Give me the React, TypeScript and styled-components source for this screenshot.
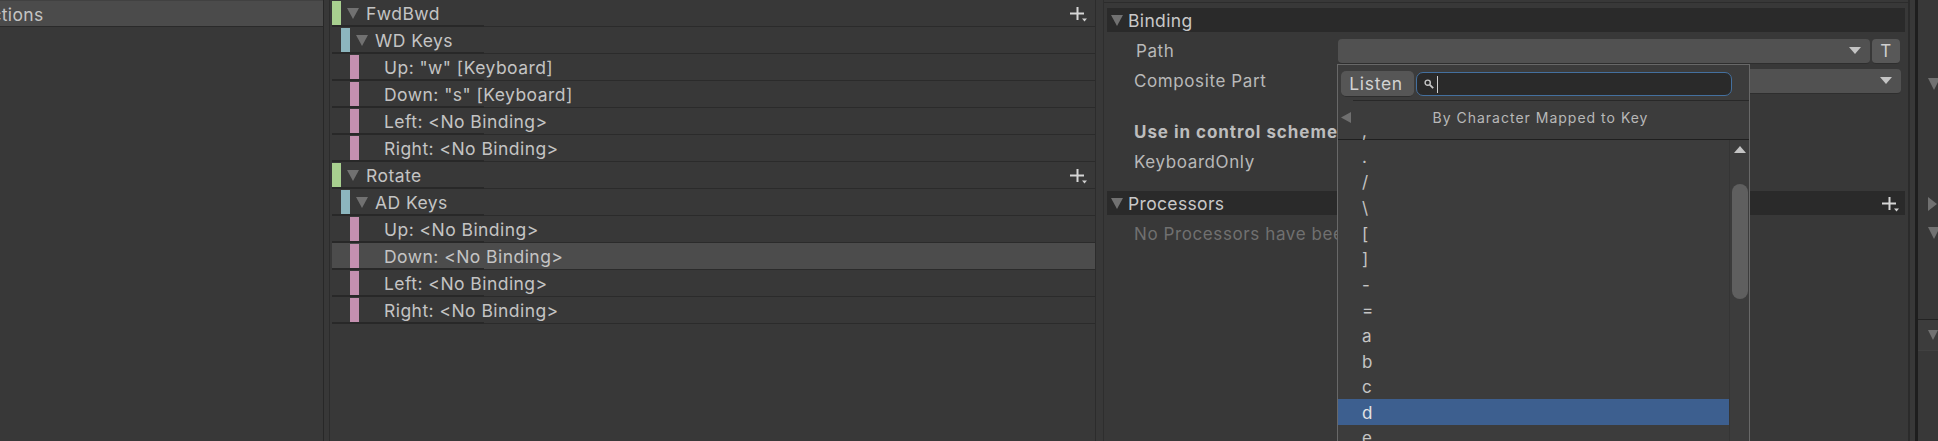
import styled, { createGlobalStyle } from "styled-components";

const GlobalStyle = createGlobalStyle`
  html, body {
    margin: 0;
    padding: 0;
    background: #383838;
    overflow: hidden;
  }
  * {
    box-sizing: border-box;
  }
`;

const Window = styled.div`
  display: flex;
  width: 1938px;
  height: 441px;
  overflow: hidden;
  background: #383838;
  color: #c4c4c4;
  font-family: Inter, "Liberation Sans", sans-serif;
  font-size: 17.5px;
`;

const MapsPanel = styled.div`
  width: 324px;
  flex: none;
  border-right: 1px solid #282828;
`;

const MapRow = styled.div`
  height: 27px;
  width: 323px;
  background: #4b4b4b;
  border-top: 1px solid #414141;
  border-bottom: 1px solid #2a2a2a;
  display: flex;
  align-items: center;
  overflow: hidden;
`;

const MapName = styled.span`
  margin-left: -21px;
  margin-top: 1px;
  letter-spacing: 0.35px;
`;

const ActionsPanel = styled.div`
  width: 766px;
  flex: none;
  margin-left: 5px;
  padding-left: 2px;
  border-left: 1px solid #2c2c2c;
`;

const Row = styled.div<{ $selected?: boolean }>`
  position: relative;
  height: 27px;
  display: flex;
  align-items: center;
  border-bottom: 1px solid #2b2b2b;
  background: ${(props) => (props.$selected ? "#4c4c4c" : "transparent")};

  &::after {
    content: "";
    position: absolute;
    left: 0;
    bottom: -1px;
    width: 152px;
    height: 2px;
    background: #282828;
  }
`;

const Stripe = styled.div<{ $depth: number; $color: string }>`
  width: 9px;
  height: 25px;
  flex: none;
  align-self: flex-start;
  margin-top: 1px;
  margin-left: ${(props) => props.$depth * 9}px;
  background: ${(props) => props.$color};
`;

const Label = styled.span<{ $leaf?: boolean }>`
  margin-left: ${(props) => (props.$leaf ? "25px" : "7px")};
  margin-top: 1px;
  letter-spacing: 0.45px;
  white-space: nowrap;
`;

const Fold = styled.svg<{ $left?: number }>`
  flex: none;
  fill: #717171;
  margin-left: ${(props) => props.$left ?? 0}px;
`;

const PlusSlot = styled.div<{ $right: number }>`
  margin-left: auto;
  margin-right: ${(props) => props.$right}px;
  margin-top: 3px;
  display: flex;
`;

const Gutter = styled.div`
  width: 9px;
  flex: none;
  border-left: 1px solid #2c2c2c;
  border-right: 1px solid #2e2e2e;
`;

const Inspector = styled.div`
  position: relative;
  width: 804px;
  flex: none;
  padding: 8px 3px 0;
  border-top: 1px solid #2c2c2c;
  margin-top: 2px;
  margin-bottom: -2px;
`;

const SectionBar = styled.div`
  height: 24px;
  background: #2a2a2a;
  display: flex;
  align-items: center;
  margin-top: -3px;
  padding-left: 4px;
  letter-spacing: 0.35px;
  color: #c8c8c8;
`;

const SectionTitle = styled.span`
  margin-left: 5px;
`;

const FieldRow = styled.div<{ $indent: number; $gap?: number }>`
  height: 30px;
  display: flex;
  align-items: center;
  margin-top: ${(props) => props.$gap ?? 0}px;
  padding-left: ${(props) => props.$indent}px;
  font-size: 17px;
  letter-spacing: 0.6px;
  color: #b9b9b9;
`;

const FieldLabel = styled.span<{ $width: number }>`
  width: ${(props) => props.$width}px;
  flex: none;
`;

const Dropdown = styled.div<{ $width: number }>`
  width: ${(props) => props.$width}px;
  height: 25px;
  background: #515151;
  border-radius: 4px;
  border-bottom: 1px solid #2e2e2e;
  display: flex;
  align-items: center;
  justify-content: flex-end;
  padding-right: 9px;
`;

const DropArrow = styled.svg`
  fill: #c4c4c4;
`;

const TypeButton = styled.div`
  width: 28px;
  height: 25px;
  margin-left: 2px;
  background: #585858;
  border-radius: 4px;
  border-bottom: 1px solid #2e2e2e;
  display: flex;
  align-items: center;
  justify-content: center;
  font-size: 17px;
  color: #cfcfcf;
`;

const SchemeHeading = styled.div`
  height: 30px;
  margin-top: 21px;
  padding-left: 27px;
  display: flex;
  align-items: center;
  font-size: 17px;
  font-weight: 700;
  letter-spacing: 0.95px;
  white-space: nowrap;
  color: #bdbdbd;
`;

const SchemeRow = styled.div`
  height: 30px;
  padding-left: 27px;
  display: flex;
  align-items: center;
  font-size: 17px;
  letter-spacing: 0.6px;
  color: #b9b9b9;
`;

const EmptyNote = styled.div`
  height: 30px;
  margin-top: 4px;
  padding-left: 27px;
  display: flex;
  align-items: center;
  font-size: 17px;
  letter-spacing: 0.6px;
  white-space: nowrap;
  color: #707070;
`;

const ProcessorsBar = styled(SectionBar)`
  margin-top: 14px;
`;

const Popup = styled.div`
  position: absolute;
  left: 233px;
  top: 61px;
  width: 413px;
  height: 400px;
  background: #3c3c3c;
  border: 1px solid #686868;
  border-bottom: none;
  display: flex;
  flex-direction: column;
  overflow: hidden;
`;

const Toolbar = styled.div`
  position: relative;
  height: 36px;
  flex: none;
  display: flex;
  align-items: center;
  padding: 2px 17px 0 3px;
  gap: 2px;

  &::after {
    content: "";
    position: absolute;
    left: 15px;
    right: 0;
    bottom: 0;
    height: 1px;
    background: #282828;
  }
`;

const ListenButton = styled.div`
  width: 73px;
  height: 26px;
  flex: none;
  padding-right: 3px;
  background: #565656;
  border-radius: 5px;
  border-bottom: 1px solid #2e2e2e;
  display: flex;
  align-items: center;
  justify-content: center;
  font-size: 17.5px;
  letter-spacing: 0.7px;
  color: #d2d2d2;
`;

const SearchField = styled.div`
  flex: 1;
  height: 24px;
  background: #2a2a2a;
  border: 1px solid #44709f;
  border-radius: 7px;
  display: flex;
  align-items: center;
  padding-left: 7px;
  gap: 3px;
`;

const Caret = styled.div`
  width: 1px;
  height: 17px;
  background: #d0d0d0;
`;

const MenuHeader = styled.div`
  height: 39px;
  flex: none;
  display: flex;
  align-items: center;
  padding: 0 0 5px 3px;
  border-bottom: 1px solid #1f1f1f;
`;

const BackArrow = styled.svg`
  flex: none;
  fill: #6f6f6f;
`;

const MenuTitle = styled.div`
  flex: 1;
  text-align: center;
  font-size: 14px;
  letter-spacing: 1px;
  color: #b8b8b8;
  padding-right: 19px;
`;

const MenuBody = styled.div`
  flex: 1;
  min-height: 0;
  display: flex;
`;

const ItemList = styled.div`
  width: 391px;
  flex: none;
  margin-top: -22.6px;
`;

const Item = styled.div<{ $active?: boolean }>`
  height: 25.6px;
  padding: 2px 0 0 24px;
  display: flex;
  align-items: center;
  font-size: 17px;
  color: ${(props) => (props.$active ? "#e4e4e4" : "#c4c4c4")};
  background: ${(props) => (props.$active ? "#3d5f8f" : "transparent")};
`;

const ScrollTrack = styled.div`
  flex: 1;
  border-left: 1px solid #353535;
  display: flex;
  flex-direction: column;
  align-items: center;
  padding-top: 6px;
`;

const ScrollThumb = styled.div`
  width: 16px;
  height: 115px;
  margin-top: 31px;
  border-radius: 8px;
  background: #5f5f5f;
`;

const DockGutter = styled.div`
  width: 7px;
  flex: none;
  border-left: 2px solid #2b2b2b;
`;

const Dock = styled.div`
  width: 23px;
  flex: none;
  display: flex;
  flex-direction: column;
  padding-left: 10px;
  border-left: 3px solid #1e1e1e;
`;

const DockIcon = styled.svg<{ $top: number }>`
  display: block;
  margin-top: ${(props) => props.$top}px;
  fill: #717171;
  flex: none;
`;

const DockRow = styled.div`
  height: 32px;
  margin: 80px 0 0 -10px;
  padding-left: 10px;
  background: #3c3c3c;
  border-top: 1px solid #232323;
  border-bottom: 1px solid #414141;
  display: flex;
  align-items: center;
`;

function FoldDown({ left }: { left?: number }) {
  return (
    <Fold $left={left} width="12" height="11" viewBox="0 0 12 11">
      <path d="M0 0H12L6 11Z" />
    </Fold>
  );
}

function PlusMore() {
  return (
    <svg width="17" height="15" viewBox="0 0 17 15">
      <path d="M6.5 0H8.5V5.5H14V7.5H8.5V13H6.5V7.5H0V5.5H6.5Z" fill="#d6d6d6" />
      <path d="M12 11.5H17L14.5 14.5Z" fill="#d0d0d0" />
    </svg>
  );
}

function SearchGlyph() {
  return (
    <svg width="10" height="10" viewBox="0 0 10 10" fill="none" stroke="#c8c8c8">
      <circle cx="3.7" cy="3.7" r="2.6" strokeWidth="1.4" />
      <path d="M5.8 5.8L9.2 9.2" strokeWidth="1.8" />
    </svg>
  );
}

const GREEN = "#a8d08f";
const TEAL = "#8cb6be";
const PINK = "#c490b0";

const menuKeys = [",", ".", "/", "\\", "[", "]", "-", "=", "a", "b", "c", "d", "e"];

function ActionRow({ name, depth }: { name: string; depth: number }) {
  return (
    <Row>
      <Stripe $depth={depth} $color={depth === 0 ? GREEN : TEAL} />
      <FoldDown left={6} />
      <Label>{name}</Label>
      {depth === 0 ? (
        <PlusSlot $right={8}>
          <PlusMore />
        </PlusSlot>
      ) : null}
    </Row>
  );
}

function BindingRow({ name, selected }: { name: string; selected?: boolean }) {
  return (
    <Row $selected={selected}>
      <Stripe $depth={2} $color={PINK} />
      <Label $leaf>{name}</Label>
    </Row>
  );
}

export default function App() {
  return (
    <Window>
      <GlobalStyle />
      <MapsPanel>
        <MapRow>
          <MapName>Actions</MapName>
        </MapRow>
      </MapsPanel>
      <ActionsPanel>
        <ActionRow name="FwdBwd" depth={0} />
        <ActionRow name="WD Keys" depth={1} />
        <BindingRow name={'Up: "w" [Keyboard]'} />
        <BindingRow name={'Down: "s" [Keyboard]'} />
        <BindingRow name="Left: <No Binding>" />
        <BindingRow name="Right: <No Binding>" />
        <ActionRow name="Rotate" depth={0} />
        <ActionRow name="AD Keys" depth={1} />
        <BindingRow name="Up: <No Binding>" />
        <BindingRow name="Down: <No Binding>" selected />
        <BindingRow name="Left: <No Binding>" />
        <BindingRow name="Right: <No Binding>" />
      </ActionsPanel>
      <Gutter />
      <Inspector>
        <SectionBar>
          <FoldDown />
          <SectionTitle>Binding</SectionTitle>
        </SectionBar>
        <FieldRow $indent={29} $gap={4}>
          <FieldLabel $width={202}>Path</FieldLabel>
          <Dropdown $width={532}>
            <DropArrow width="12" height="7" viewBox="0 0 12 7">
              <path d="M0 0H12L6 7Z" />
            </DropArrow>
          </Dropdown>
          <TypeButton>T</TypeButton>
        </FieldRow>
        <FieldRow $indent={27}>
          <FieldLabel $width={204}>Composite Part</FieldLabel>
          <Dropdown $width={563}>
            <DropArrow width="12" height="7" viewBox="0 0 12 7">
              <path d="M0 0H12L6 7Z" />
            </DropArrow>
          </Dropdown>
        </FieldRow>
        <SchemeHeading>Use in control scheme</SchemeHeading>
        <SchemeRow>KeyboardOnly</SchemeRow>
        <ProcessorsBar>
          <FoldDown />
          <SectionTitle>Processors</SectionTitle>
          <PlusSlot $right={6}>
            <PlusMore />
          </PlusSlot>
        </ProcessorsBar>
        <EmptyNote>No Processors have been added.</EmptyNote>
        <Popup>
          <Toolbar>
            <ListenButton>Listen</ListenButton>
            <SearchField>
              <SearchGlyph />
              <Caret />
            </SearchField>
          </Toolbar>
          <MenuHeader>
            <BackArrow width="10" height="11" viewBox="0 0 10 11">
              <path d="M10 0V11L0 5.5Z" />
            </BackArrow>
            <MenuTitle>By Character Mapped to Key</MenuTitle>
          </MenuHeader>
          <MenuBody>
            <ItemList>
              {menuKeys.map((key) => (
                <Item key={key} $active={key === "d"}>
                  {key}
                </Item>
              ))}
            </ItemList>
            <ScrollTrack>
              <svg width="12" height="7" viewBox="0 0 12 7" fill="#c4c4c4">
                <path d="M6 0L12 7H0Z" />
              </svg>
              <ScrollThumb />
            </ScrollTrack>
          </MenuBody>
        </Popup>
      </Inspector>
      <DockGutter />
      <Dock>
        <DockIcon $top={78} width="12" height="12" viewBox="0 0 12 12">
          <path d="M0 0H12L6 12Z" />
        </DockIcon>
        <DockIcon $top={107} width="9" height="14" viewBox="0 0 9 14">
          <path d="M0 0L9 7L0 14Z" />
        </DockIcon>
        <DockIcon $top={16} width="12" height="12" viewBox="0 0 12 12">
          <path d="M0 0H12L6 12Z" />
        </DockIcon>
        <DockRow>
          <svg width="12" height="12" viewBox="0 0 12 12" fill="#717171">
            <path d="M0 0H12L6 12Z" />
          </svg>
        </DockRow>
      </Dock>
    </Window>
  );
}
